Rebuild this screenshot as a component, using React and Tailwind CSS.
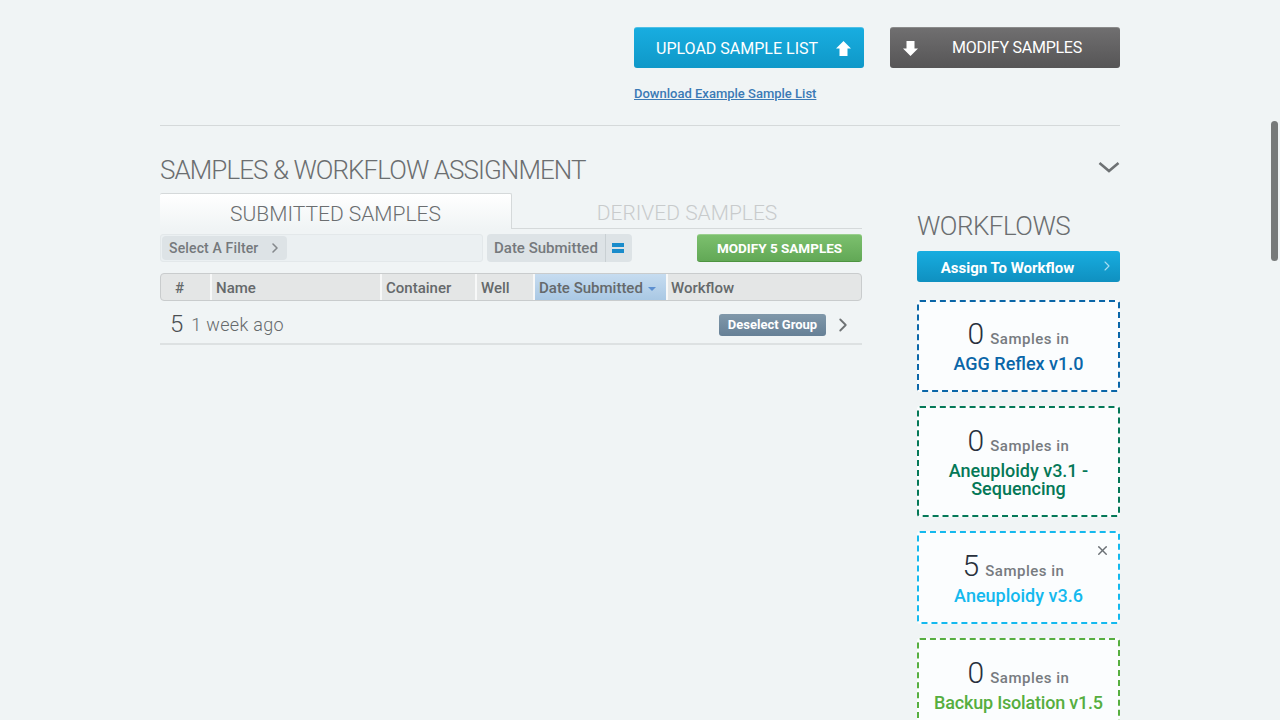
import { ChevronRight, X } from "lucide-react";

const workflows = [
  { count: 0, name: "AGG Reflex v1.0", border: "border-[#0a66a8]", text: "text-[#0a66a8]", h: "h-[92px]", top: "pt-[15px]" },
  { count: 0, name: "Aneuploidy v3.1 - Sequencing", border: "border-[#047857]", text: "text-[#047857]", h: "h-[111px]", top: "pt-[16px]", pad: "px-[20px]" },
  { count: 5, name: "Aneuploidy v3.6", border: "border-[#14b9ee]", text: "text-[#14b9ee]", h: "h-[93px]", top: "pt-[16px]", close: true, shift: "pr-[10px]" },
  { count: 0, name: "Backup Isolation v1.5", border: "border-[#56ae3f]", text: "text-[#56ae3f] tracking-[-0.2px]", h: "h-[92px]", top: "pt-[16px]" },
];

const columns = [
  { label: "#", w: "w-[51px]", cls: "pl-[14px]" },
  { label: "Name", w: "w-[170px]", cls: "pl-[4px]" },
  { label: "Container", w: "w-[95px]", cls: "pl-[4px]" },
  { label: "Well", w: "w-[58px]", cls: "pl-[4px]" },
  { label: "Date Submitted", w: "w-[133px]", cls: "pl-[4px] bg-gradient-to-b from-[#c6dcf0] to-[#a9c8e4]", sort: true },
  { label: "Workflow", w: "flex-1", cls: "pl-[3px]", last: true },
];

function UpArrow({ down }) {
  return (
    <svg width="15" height="15" viewBox="0 0 15 15" className={`shrink-0 ${down ? "rotate-180" : ""}`}>
      <path d="M7.5 0 L15 7.5 H11.5 V15 H3.5 V7.5 H0 Z" fill="#fff" />
    </svg>
  );
}

function WorkflowCard({ count, name, border, text, h, top, close, shift, pad }) {
  return (
    <div className={`relative ${h} ${top} shrink-0 rounded-[3px] border-2 border-dashed ${border} bg-[#fbfdfe] text-center`}>
      {close && <X className="absolute right-[8px] top-[10px] h-[15px] w-[15px] text-[#6b7075]" strokeWidth={2.2} />}
      <div className={`flex h-[34px] items-end justify-center gap-[6px] ${shift || ""}`}>
        <span className="text-[30px] leading-[34px] font-light text-[#28303c]">{count}</span>
        <span className="pb-[2px] text-[15px] leading-[20px] font-medium tracking-[0.5px] text-[#777b80]">Samples in</span>
      </div>
      <div className={`mt-[4px] ${pad || "px-[4px]"} text-[18px] leading-[18px] font-medium ${text}`}>{name}</div>
    </div>
  );
}

export default function App() {
  return (
    <div className="relative h-screen w-full overflow-hidden bg-[#f0f4f5] font-['Roboto',sans-serif]">
      <div className="ml-[160px] w-[960px] pt-[27px]">
        {/* Upload row */}
        <div className="flex justify-end gap-[26px]">
          <button className="flex h-[41px] w-[230px] items-center justify-between rounded-[3px] border-t border-[#4fc0e6] bg-gradient-to-b from-[#18ade0] to-[#0f98c8] pl-[22px] pr-[13px] text-[16px] text-white">
            <span className="pt-px">UPLOAD SAMPLE LIST</span>
            <UpArrow />
          </button>
          <button className="flex h-[41px] w-[230px] items-center rounded-[3px] border-t border-[#8b8b8b] bg-gradient-to-b from-[#706f70] to-[#565556] pl-[13px] text-[16px] tracking-[-0.25px] text-white">
            <UpArrow down />
            <span className="ml-[34px]">MODIFY SAMPLES</span>
          </button>
        </div>
        <div className="mt-[18px] pl-[474px] text-[13px] leading-[16px] font-medium text-[#3b7ab5] underline">
          Download Example Sample List
        </div>
        <div className="mt-[23px] h-px bg-[#d5d9da]" />

        {/* Section heading */}
        <div className="mt-[26px] flex items-center justify-between">
          <h1 className="text-[26px] leading-[36px] font-light tracking-[-0.93px] text-[#6b6e70]">SAMPLES &amp; WORKFLOW ASSIGNMENT</h1>
          <svg width="22" height="13" viewBox="0 0 22 13" className="-mt-[6px]">
            <path d="M1.5 2 L11 10 L20.5 2" fill="none" stroke="#6e7274" strokeWidth="2.6" />
          </svg>
        </div>

        <div className="flex justify-between">
          {/* Left column */}
          <div className="mt-[5px] w-[702px]">
            <div className="flex h-[36px]">
              <div className="flex w-[352px] items-center justify-center rounded-t-[2px] border-r border-t border-[#d5d9da] bg-gradient-to-b from-white to-[#f0f4f5] pt-[6px] text-[21px] font-light text-[#6b6e70]">
                SUBMITTED SAMPLES
              </div>
              <div className="flex flex-1 items-center justify-center border-b border-[#d5d9da] pt-[6px] text-[21px] font-light text-[#c8cbcc]">
                DERIVED SAMPLES
              </div>
            </div>

            {/* Filters */}
            <div className="mt-[5px] flex h-[28px]">
              <div className="flex w-[323px] items-center rounded-[3px] border border-[#e3e8ea] bg-[#ebf0f2] pl-[1px]">
                <div className="flex h-[24px] w-[125px] items-center justify-between rounded-[4px] bg-[#dde3e6] pl-[7px] pr-[4px] text-[14px] font-medium tracking-[0.15px] text-[#75797c]">
                  <span className="pt-px">Select A Filter</span>
                  <ChevronRight className="h-[16px] w-[16px] text-[#85898c]" strokeWidth={2.4} />
                </div>
              </div>
              <div className="ml-[4px] flex w-[145px] items-center rounded-[4px] bg-[#dde3e6]">
                <span className="w-[119px] border-r border-[#c9d0d3] pl-[7px] text-[15px] leading-[28px] font-medium text-[#75797c]">Date Submitted</span>
                <span className="ml-[6px] flex w-[12px] flex-col gap-[2px]">
                  <span className="h-[4px] bg-[#1a8ccb]" />
                  <span className="h-[4px] bg-[#1a8ccb]" />
                </span>
              </div>
              <button className="ml-auto h-[28px] w-[165px] rounded-[3px] border-b border-t border-b-[#4d9440] border-t-[#9ad08e] bg-gradient-to-b from-[#7cc06e] to-[#62a856] text-[13.5px] font-bold text-white">
                MODIFY 5 SAMPLES
              </button>
            </div>

            {/* Table head */}
            <div className="mt-[11px] flex h-[28px] overflow-hidden rounded-[4px] border border-[#c9cccd] bg-[#e4e6e6]">
              {columns.map((c) => (
                <div key={c.label} className={`flex items-center pt-[2px] ${c.w} ${c.cls} ${c.last ? "" : "border-r-2 border-[#f7f8f8]"} text-[15px] font-medium text-[#65696b]`}>
                  {c.label}
                  {c.sort && <span className="ml-[5px] mt-[1px] h-0 w-0 border-x-[4px] border-t-[4px] border-x-transparent border-t-[#5d8fd0]" />}
                </div>
              ))}
            </div>

            {/* Group row */}
            <div className="flex h-[44px] items-center border-b-2 border-[#dde1e2] pl-[10px]">
              <span className="mt-[4px] text-[24px] font-light text-[#4b4f52]">5</span>
              <span className="ml-[8px] mt-[4px] text-[18px] font-light tracking-[0.3px] text-[#65696b]">1 week ago</span>
              <button className="ml-auto mt-[6px] h-[22px] w-[107px] rounded-[3px] bg-gradient-to-b from-[#8098aa] to-[#668096] text-[13px] font-bold text-white">
                Deselect Group
              </button>
              <ChevronRight className="ml-[6px] mr-[8px] mt-[6px] h-[22px] w-[22px] text-[#6e7274]" strokeWidth={2} />
            </div>
          </div>

          {/* Workflows */}
          <div className="flex w-[203px] flex-col">
            <h2 className="mt-[21px] text-[26px] leading-[34px] font-light tracking-[-0.5px] text-[#6b6e70]">WORKFLOWS</h2>
            <button className="relative mt-[8px] h-[31px] rounded-[3px] bg-gradient-to-b from-[#18ade0] to-[#0f90c0] pt-[3px] text-[15px] font-bold text-white">
              <span className="-ml-[22px]">Assign To Workflow</span>
              <ChevronRight className="absolute right-[5px] top-[7px] h-[16px] w-[16px] text-[#a9def2]" strokeWidth={1.6} />
            </button>
            <div className="mt-[18px] flex flex-col gap-[14px]">
              {workflows.map((w) => (
                <WorkflowCard key={w.name} {...w} />
              ))}
            </div>
          </div>
        </div>
      </div>

      {/* Scrollbar thumb */}
      <div className="absolute right-[2px] top-[121px] h-[140px] w-[7px] rounded-full bg-[#777a7a]" />
    </div>
  );
}
